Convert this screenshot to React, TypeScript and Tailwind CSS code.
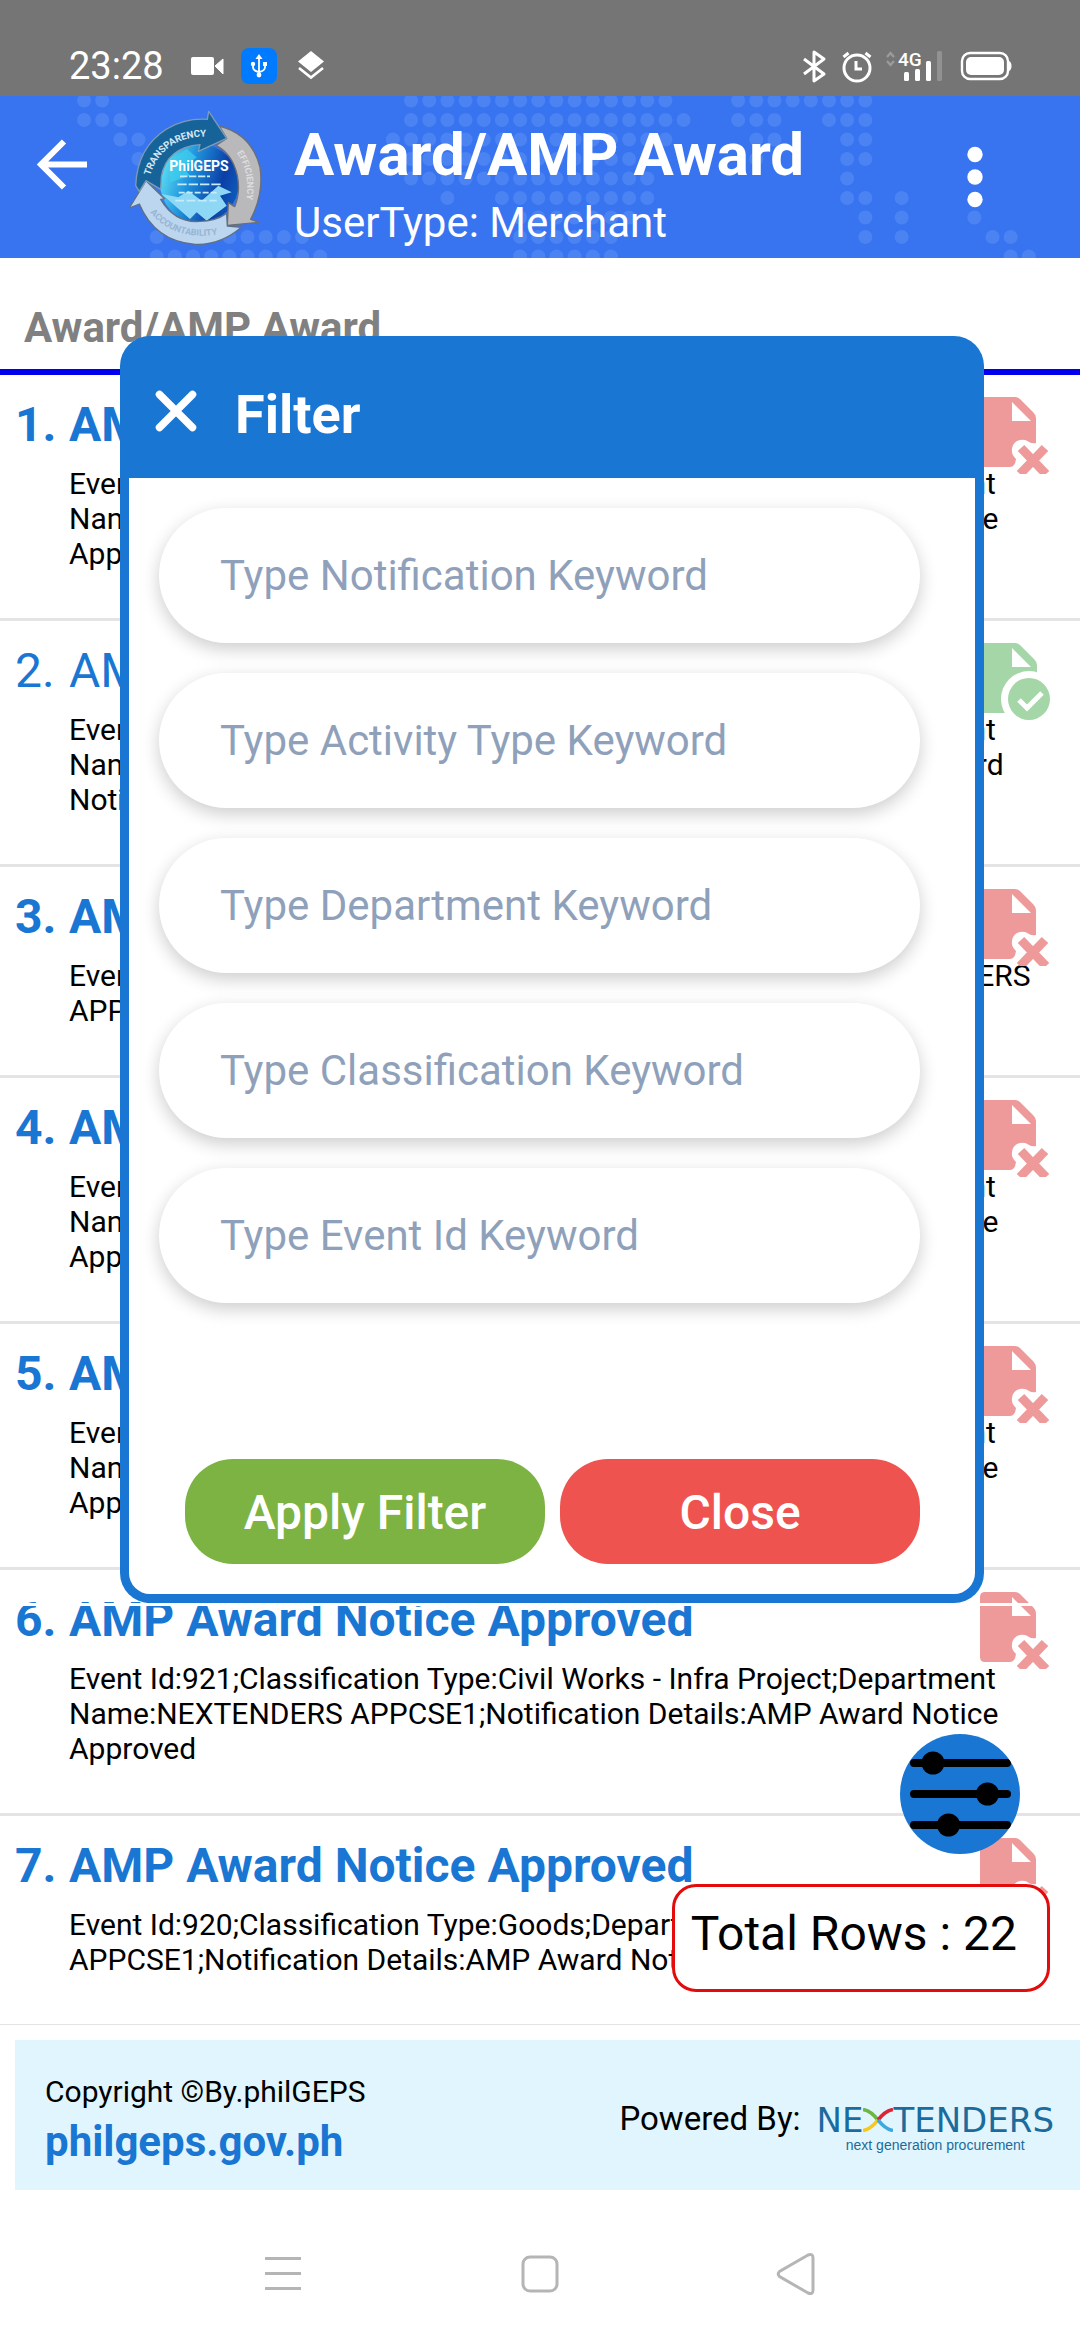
import { useId } from 'react';

const DOT_ROWS: [number, number][][] = [
  [[0, 1], [18, 32], [36, 43]],
  [[0, 2], [18, 33], [36, 38], [41, 43]],
  [[2, 3], [17, 32], [37, 38], [42, 43]],
  [[3, 3], [18, 30], [37, 37], [42, 43]],
  [[18, 31], [42, 42]],
  [[20, 20], [23, 31], [42, 43], [45, 45]],
  [[24, 30], [43, 43], [45, 45], [49, 49]],
  [[4, 4], [8, 12], [24, 29], [43, 43], [45, 45], [50, 51]],
  [[4, 13], [24, 29], [51, 52]],
];

function MapDots() {
  const dots = DOT_ROWS.flatMap((ranges, r) =>
    ranges.flatMap(([a, b]) => Array.from({ length: b - a + 1 }, (_, i) => ({ c: a + i, r })))
  );
  return (
    <svg aria-hidden="true" className="absolute inset-0 h-full w-full" viewBox="0 0 1080 162" preserveAspectRatio="none">
      {dots.map((d) => (
        <circle key={`${d.r}-${d.c}`} cx={84 + d.c * 18.17} cy={4.5 + d.r * 19.5} r="7" fill="#4b83f2" />
      ))}
    </svg>
  );
}

function StatusBar() {
  return (
    <div className="flex h-24 items-start justify-between bg-[#757575] pr-[68px] pl-[69px] text-white">
      <div className="flex h-full items-start pt-11">
        <span className="w-[122px] text-[38px] leading-[44px]">23:28</span>
        <svg width="140" height="44" viewBox="191 44 140 44" aria-hidden="true">
          <rect x="191" y="57" width="23" height="18" rx="2" fill="#fff" />
          <path d="M215 66l8-7v15z" fill="#fff" stroke="#fff" strokeLinejoin="round" />
          <rect x="241" y="48" width="36" height="36" rx="8" fill="#007aff" />
          <g stroke="#fff" strokeWidth="1.8" fill="none">
            <path d="M259 58v17M253 64v3q0 4 6 5q6-1 6-5v-3" />
          </g>
          <path d="M259 54l3.500 5h-7z" fill="#fff" />
          <circle cx="259" cy="75" r="2.400" fill="#fff" />
          <circle cx="253" cy="64" r="2.200" fill="#fff" />
          <rect x="263" y="62" width="4" height="4" fill="#fff" />
          <path d="M311 51l13 10.500-13 10.500-13-10.500z" fill="#fff" />
          <path d="M299 68l12 9.500 12-9.500" fill="none" stroke="#fff" strokeWidth="2.600" />
        </svg>
      </div>
      <svg width="210" height="40" viewBox="802 48 210 40" className="mt-12" aria-hidden="true">
        <path d="M804 59l20 15-10 7V52l10 7-20 15" fill="none" stroke="#fff" strokeWidth="3" strokeLinejoin="round" />
        <circle cx="857" cy="68" r="13" fill="none" stroke="#fff" strokeWidth="3" />
        <path d="M856 61v8h6M843.500 57l5-4M870.500 57l-5-4" fill="none" stroke="#fff" strokeWidth="3" />
        <path d="M887 57l3.500-4 3.500 4M887 61l3.500 4 3.500-4" fill="none" stroke="#9b9b9b" strokeWidth="2.400" />
        <text x="898" y="66" fontFamily="Roboto, sans-serif" fontSize="19" fontWeight="500" fill="#fff">4G</text>
        <rect x="904" y="72" width="5" height="9" rx="1.500" fill="#fff" />
        <rect x="915" y="69" width="5" height="12" rx="1.500" fill="#fff" />
        <rect x="926" y="61" width="5" height="20" rx="1.500" fill="#fff" />
        <rect x="937" y="51" width="5" height="30" rx="1.500" fill="#929292" />
        <rect x="962" y="53" width="46" height="26" rx="8" fill="none" stroke="#fff" strokeWidth="2.400" />
        <rect x="966" y="57" width="38" height="18" rx="5" fill="#fff" />
        <path d="M1009 61q2.500 1 2.500 5t-2.500 5z" fill="#fff" />
      </svg>
    </div>
  );
}

function PhilGepsLogo() {
  const id = useId();
  return (
    <svg width="136" height="140" viewBox="24 15 408 420" role="img" aria-label="PhilGEPS">
      <defs>
        <linearGradient id={`${id}g`} x1="0" y1="0.2" x2="1" y2="0.5">
          <stop offset="0" stopColor="#63e6f5" />
          <stop offset="0.4" stopColor="#1f93dd" />
          <stop offset="0.8" stopColor="#0b3fa6" />
          <stop offset="1" stopColor="#0d57b8" />
        </linearGradient>
        <path id={`${id}a`} d="M90 215Q130 88 285 98" />
        <path id={`${id}b`} d="M345 140Q400 210 372 320" />
        <path id={`${id}c`} d="M84 318Q170 425 325 384" />
      </defs>
      <circle cx="238" cy="238" r="118" fill={`url(#${id}g)`} />
      <path d="M125 270l85 75 20-20 30 25 60-45-20-30 35-10-40-20-50 45-40-30-30 20z" fill="#8ed8f5" />
      <path d="M150 170l50-35 30 25-40 30 20 25-60 20z" fill="#3fd0ee" opacity="0.7" />
      <g stroke="#c4ecfb" strokeWidth="5">
        <path d="M180 217h90" strokeDasharray="22 5" />
        <path d="M172 241h130" strokeDasharray="28 6" />
        <path d="M176 266h120" strokeDasharray="18 6" />
        <path d="M166 290h124" strokeDasharray="26 8" />
      </g>
      <path
        d="M298 66Q395 90 420 190Q432 270 392 346L416 355 322 364 325 296 344 308Q362 265 352 215Q338 150 288 124L320 103z"
        fill="#b9b9bb" stroke="#6a6e78" strokeWidth="4" strokeLinejoin="round"
      />
      <path
        d="M78 230L134 284 122 286Q165 358 240 352Q285 352 320 328L322 366 364 370Q300 425 225 421Q105 412 58 300L28 312z"
        fill="#bcd6f0" stroke="#5e6f86" strokeWidth="4" strokeLinejoin="round"
      />
      <path
        d="M47 245Q52 130 140 75Q195 42 262 46L266 22 320 103 235 142 240 122Q140 130 124 218L122 256 78 230 58 262z"
        fill="#16639a" stroke="#7d9bb3" strokeWidth="4" strokeLinejoin="round"
      />
      <g fontFamily="Roboto, sans-serif" fontWeight="700">
        <text fontSize="29" fill="#d5e8f5"><textPath href={`#${id}a`}>TRANSPARENCY</textPath></text>
        <text fontSize="27" fill="#dddddf"><textPath href={`#${id}b`} startOffset="8">EFFICIENCY</textPath></text>
        <text fontSize="27" fill="#98b4d2"><textPath href={`#${id}c`} startOffset="10">ACCOUNTABILITY</textPath></text>
        <text x="237" y="201" textAnchor="middle" fontSize="42" fill="#fff">PhilGEPS</text>
      </g>
    </svg>
  );
}

function Header() {
  return (
    <header className="relative flex h-[162px] items-start bg-[#3874f0] text-white">
      <MapDots />
      <button aria-label="Back" className="relative mt-10 ml-8 flex h-[57px] w-[60px] items-center justify-center">
        <svg width="52" height="52" viewBox="36 139 52 52" fill="none" stroke="#fff" strokeWidth="6">
          <path d="M87 164.500H40M64 141.500l-23 23 23 23" />
        </svg>
      </button>
      <div className="relative mt-[13px] ml-9">
        <PhilGepsLogo />
      </div>
      <div className="relative ml-[30px] flex-1 pt-6">
        <h1 className="text-[60px] leading-[70px] font-bold">Award/AMP Award</h1>
        <p className="pt-2 text-[42px] leading-[50px]">UserType: Merchant</p>
      </div>
      <button aria-label="More options" className="relative mt-12 mr-[90px] flex h-[66px] w-[30px] justify-center">
        <svg width="16" height="66" viewBox="0 0 16 66" fill="#fff">
          <circle cx="8" cy="10.500" r="7.700" />
          <circle cx="8" cy="33" r="7.700" />
          <circle cx="8" cy="55.500" r="7.700" />
        </svg>
      </button>
    </header>
  );
}

function FileIcon({ ok }: { ok: boolean }) {
  const id = useId();
  return ok ? (
    <svg width="72" height="78" viewBox="0 0 72 78" role="img" aria-label="Approved">
      <mask id={id}>
        <rect width="72" height="78" fill="#fff" />
        <circle cx="49" cy="56" r="28" fill="#000" />
      </mask>
      <path mask={`url(#${id})`} fillRule="evenodd" fill="#a5d6a7" d="M5 0h30q3 0 5 2l14 14q3 3 3 6v48H5q-5 0-5-5V5q0-5 5-5zM32 5v19h19z" />
      <circle cx="49" cy="56" r="21" fill="#a5d6a7" />
      <path d="M39 57l8 8 15-15" fill="none" stroke="#fff" strokeWidth="5" />
    </svg>
  ) : (
    <svg width="72" height="77" viewBox="0 0 72 77" role="img" aria-label="Rejected">
      <path
        fillRule="evenodd"
        fill="#ef9a9a"
        d="M5 0h30q3 0 5 2l13 13q3 3 3 6v25q-4 1-7-1q-5-4-12-1q-6 4-5 11q0 3 4 7q-1 8-6 8H5q-5 0-5-5V5q0-5 5-5zM32 5v19h19z"
      />
      <path d="M41 51l25 26M65 51L40 77" stroke="#ef9a9a" strokeWidth="9" />
    </svg>
  );
}

const APP = 'Name:NEXTENDERS APPCSE1;Notification Details:';
const ROWS = [
  { title: 'AMP Award Notice Approved', ok: false, body: `Event Id:926;Classification Type:Civil Works - Infra Project;Department ${APP}AMP Award Notice Approved` },
  { title: 'AMP Award Notification', ok: true, body: `Event Id:925;Classification Type:Civil Works - Infra Project;Department ${APP}Recent AMP Award Notification` },
  { title: 'AMP Award Notice Approved', ok: false, body: `Event Id:924;Classification Type:Goods;Department ${APP}AMP Award Notice Approved` },
  { title: 'AMP Award Notice Approved', ok: false, body: `Event Id:923;Classification Type:Civil Works - Infra Project;Department ${APP}AMP Award Notice Approved` },
  { title: 'AMP Award Notice Approved', ok: false, body: `Event Id:922;Classification Type:Civil Works - Infra Project;Department ${APP}AMP Award Notice Approved` },
  { title: 'AMP Award Notice Approved', ok: false, body: `Event Id:921;Classification Type:Civil Works - Infra Project;Department ${APP}AMP Award Notice Approved` },
  { title: 'AMP Award Notice Approved', ok: false, body: `Event Id:920;Classification Type:Goods;Department ${APP}AMP Award Notice Approved` },
];

function AwardList() {
  return (
    <ol>
      {ROWS.map((row, i) => (
        <li key={i} className="relative border-b-[3px] border-[#e4e4e4] pt-[22px] pb-[47px] last:border-b">
          <h3 className={`flex pl-[15px] text-[48px] leading-[56px] text-[#1976d2] ${row.ok ? 'font-normal' : 'font-bold'}`}>
            <span className="w-[54px] shrink-0">{i + 1}.</span>
            <span>{row.title}</span>
          </h3>
          <p className="mt-[13px] pr-8 pl-[69px] text-[30px] leading-[35px] text-black">{row.body}</p>
          <div className="absolute top-[22px] right-7">
            <FileIcon ok={row.ok} />
          </div>
        </li>
      ))}
    </ol>
  );
}

const FIELDS = ['Notification', 'Activity Type', 'Department', 'Classification', 'Event Id'];

function FilterDialog() {
  return (
    <div className="absolute inset-x-0 top-[336px] border-b-[3px] border-white pl-[120px]">
      <section role="dialog" aria-label="Filter" className="w-9/10 rounded-[30px] bg-[#1976d2] p-[9px]">
        <div className="flex h-[133px] items-start text-white">
          <button aria-label="Close filter" className="mt-[43px] ml-6">
            <svg width="46" height="46" viewBox="0 0 46 46" fill="none" stroke="#fff" strokeWidth="7.500" strokeLinecap="round">
              <path d="M6.500 6.500l33 33M39.500 6.500l-33 33" />
            </svg>
          </button>
          <h2 className="mt-[38px] ml-9 text-[54px] leading-[64px] font-bold">Filter</h2>
        </div>
        <form className="rounded-b-[21px] bg-white pt-[30px] pr-[55px] pb-[30px] pl-[30px]" onSubmit={(e) => e.preventDefault()}>
          <div className="flex flex-col gap-[30px]">
            {FIELDS.map((name) => (
              <input
                key={name}
                type="text"
                aria-label={`${name} keyword`}
                placeholder={`Type ${name} Keyword`}
                className="h-[135px] w-full rounded-full bg-white px-[61px] text-[42px] text-black shadow-[0_6px_18px_rgba(0,0,0,0.2)] outline-none placeholder:text-[#8fa1ba]"
              />
            ))}
          </div>
          <div className="mt-[156px] flex gap-[15px] pl-[26px] text-[48px] font-medium text-white">
            <button type="submit" className="h-[105px] flex-1 rounded-[48px] bg-[#7cb342] pt-[3px]">Apply Filter</button>
            <button type="button" className="h-[105px] flex-1 rounded-[48px] bg-[#ef5350] pt-[3px]">Close</button>
          </div>
        </form>
      </section>
    </div>
  );
}

function NextendersLogo() {
  return (
    <div className="flex flex-col items-center text-[#1b6b9c]">
      <div className="flex items-center font-['DejaVu_Sans'] text-[34px] leading-[26px]">
        <span>NE</span>
        <svg width="30" height="24" viewBox="0 0 28 24" preserveAspectRatio="none" fill="none" strokeWidth="3.500" role="img" aria-label="X">
          <path d="M0 1.500q7 1 14 10.500" stroke="#6cb644" />
          <path d="M28 1.500q-7 1-14 10.500" stroke="#dc2433" />
          <path d="M0 22.500q7-1 14-10.500" stroke="#f5c91e" />
          <path d="M28 22.500q-7-1-14-10.500" stroke="#3ea9dd" />
        </svg>
        <span>TENDERS</span>
      </div>
      <span className="pt-1 font-['Liberation_Sans'] text-[14px] leading-4">next generation procurement</span>
    </div>
  );
}

function Footer() {
  return (
    <footer className="mt-[15px] ml-[15px] flex h-[150px] justify-between bg-[#e1f5fe] pl-[30px]">
      <div className="pt-[34px]">
        <p className="text-[30px] leading-[35px] text-black">Copyright ©By.philGEPS</p>
        <a href="#" className="block pt-2 text-[42px] leading-[50px] font-bold text-[#1976d2]">philgeps.gov.ph</a>
      </div>
      <div className="flex items-start pt-[59px] pr-[26px]">
        <span className="mr-4 text-[33px] leading-[39px] text-black">Powered By:</span>
        <div className="pt-2"><NextendersLogo /></div>
      </div>
    </footer>
  );
}

function NavBar() {
  return (
    <nav className="flex h-[150px] items-center justify-center gap-[213px] pt-[18px]">
      <button aria-label="Recent apps">
        <svg width="44" height="44" viewBox="0 0 44 44" stroke="#b5b5b5" strokeWidth="3"><path d="M4 6.500h36M4 21.500h36M4 36.500h36" /></svg>
      </button>
      <button aria-label="Home">
        <svg width="44" height="44" viewBox="0 0 44 44" fill="none" stroke="#b5b5b5" strokeWidth="3"><rect x="5" y="5" width="34" height="34" rx="7" /></svg>
      </button>
      <button aria-label="Back">
        <svg width="44" height="44" viewBox="0 0 44 44" fill="none" stroke="#b5b5b5" strokeWidth="3">
          <path d="M4.500 19.500Q2 22 4.500 24.500L33 41Q38 43 38 38V6Q38 1 33 3z" />
        </svg>
      </button>
    </nav>
  );
}

export default function App() {
  return (
    <div className="relative min-h-screen bg-white font-[Roboto,sans-serif]">
      <StatusBar />
      <Header />
      <h2 className="h-[117px] border-b-[6px] border-[#0000ee] pt-[45px] pl-6 text-[42px] leading-[49px] font-bold text-[#808080]">
        Award/AMP Award
      </h2>
      <main className="relative">
        <AwardList />
        <button aria-label="Open filter" className="absolute right-[60px] bottom-[171px] h-[120px] w-[120px] overflow-hidden rounded-full bg-[#1976d2]">
          <svg width="120" height="120" viewBox="0 0 120 120" stroke="#000" strokeWidth="8" strokeLinecap="round">
            <path d="M14 29h93M14 60h93M14 91h93" />
            <g stroke="none">
              <circle cx="33" cy="29" r="11.500" />
              <circle cx="87.500" cy="60" r="11.500" />
              <circle cx="48.500" cy="91" r="11.500" />
            </g>
          </svg>
        </button>
        <div className="absolute right-[30px] bottom-[33px] h-[108px] rounded-[24px] border-[3px] border-[#e30b0b] bg-white pt-[19px] pr-[30px] pl-4 text-[48px] leading-[56px] text-black">
          Total Rows : 22
        </div>
      </main>
      <Footer />
      <NavBar />
      <FilterDialog />
    </div>
  );
}
